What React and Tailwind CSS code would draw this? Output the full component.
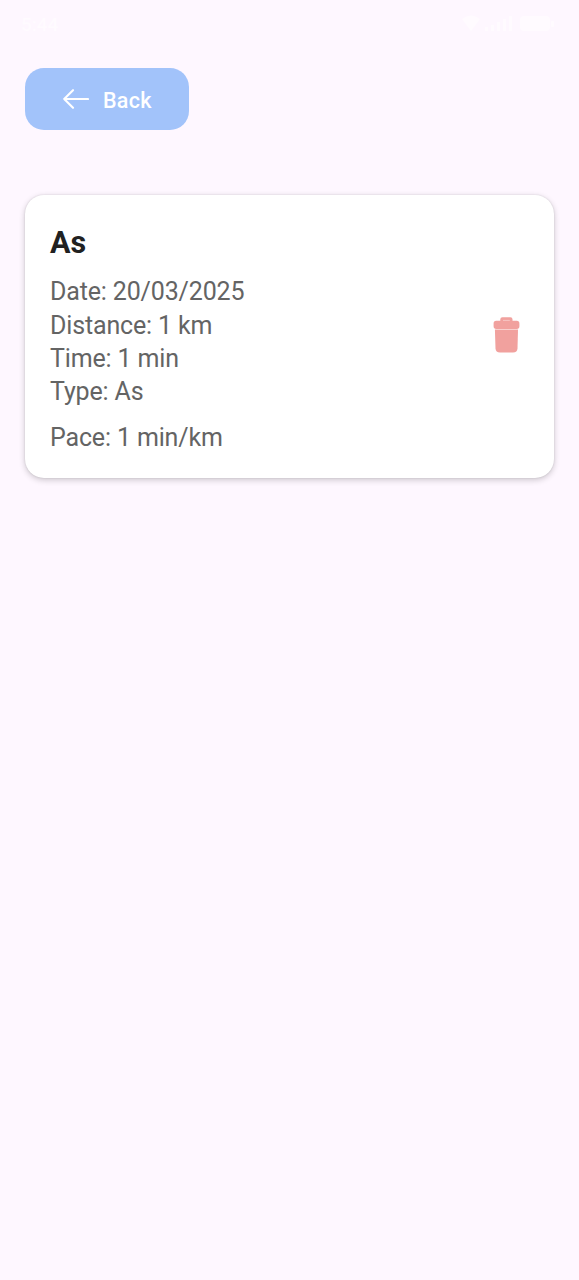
import React from "react";

function StatusBar() {
  return (
    <div className="flex h-[48px] items-center justify-between pl-[21px] pr-[24px] text-[#fffbff]">
      <span className="text-[19px] leading-none font-medium">5:44</span>
      <svg width="93" height="18" viewBox="0 0 93 18" fill="currentColor">
        <path d="M0 4Q9 -3 18 4L9 16Z" />
        <path d="M23 12h3v4h-3zM29 10h3v6h-3zM35 7h3v9h-3zM41 4h3v12h-3zM47 1h3v15h-3z" />
        <rect x="58" y="1" width="30" height="15" rx="4" />
        <rect x="89" y="6" width="3" height="6" rx="1" />
      </svg>
    </div>
  );
}

function BackButton() {
  return (
    <button className="ml-[25px] mt-5 flex h-[62px] w-[164px] items-center rounded-[19px] bg-[#a2c3fa] pl-[38px] text-white">
      <svg width="26" height="20" viewBox="0 0 26 20" fill="none" stroke="currentColor" strokeWidth="2.1" strokeLinecap="round" strokeLinejoin="round">
        <path d="M10 1.2L1.2 10L10 18.8M1.2 10H25" />
      </svg>
      <span className="ml-[14px] mt-[3px] text-[21.5px] leading-[26px] font-medium tracking-[0.3px]">Back</span>
    </button>
  );
}

function TrashIcon() {
  return (
    <svg width="27" height="38" viewBox="0 0 27 38" fill="#f1a19e">
      <path d="M7.3 3.8V2.3Q7.3 0.2 9.4 0.2H17.4Q19.5 0.2 19.5 2.3V3.8H23.8Q26.4 3.8 26.4 6.4V9.3Q26.4 12 23.8 12H3.2Q0.6 12 0.6 9.3V6.4Q0.6 3.8 3.2 3.8Z" />
      <path d="M1.9 12.6H25L24.5 31.2Q24.3 35.6 20 35.6H7Q2.7 35.6 2.5 31.2Z" />
      <path d="M10 3.4H16.8" stroke="#f7c5c3" strokeWidth="1" />
    </svg>
  );
}

function RunCard() {
  const details = ["Date: 20/03/2025", "Distance: 1 km", "Time: 1 min", "Type: As"];
  return (
    <section className="mx-[25px] mt-[65px] flex h-[282.5px] items-center justify-between rounded-[19px] bg-white pl-[25px] pr-[34px] shadow-[0_2px_6px_rgba(0,0,0,0.2),0_0_2px_rgba(0,0,0,0.12)]">
      <div className="h-full pt-[29px] text-[25px] leading-[33.3px] tracking-[-0.15px] text-[#646464]">
        <h1 className="mb-[13.4px] text-[30.5px] leading-[38px] font-bold tracking-normal text-[#212121]">As</h1>
        {details.map((line) => (
          <p key={line}>{line}</p>
        ))}
        <p className="mt-[12.6px]">Pace: 1 min/km</p>
      </div>
      <button aria-label="Delete run">
        <TrashIcon />
      </button>
    </section>
  );
}

export default function App() {
  return (
    <main className="min-h-screen overflow-hidden bg-[#fef7ff] font-['Roboto',sans-serif]">
      <StatusBar />
      <BackButton />
      <RunCard />
    </main>
  );
}
